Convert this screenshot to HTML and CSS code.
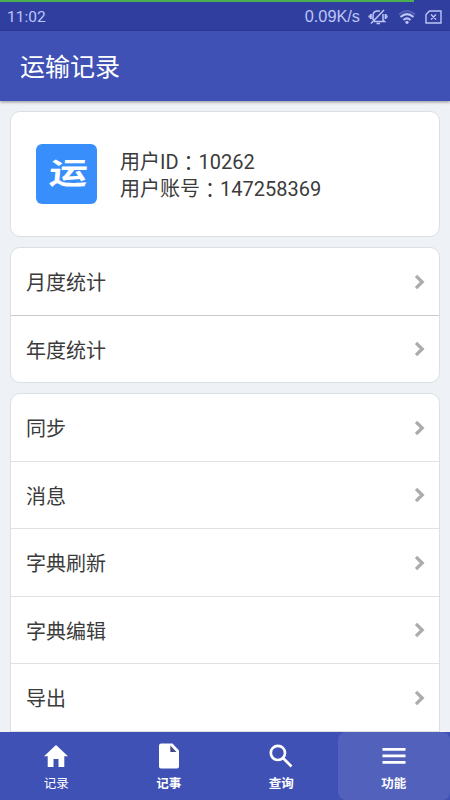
FILE: index.html
```html
<!DOCTYPE html>
<html lang="zh-CN">
<head>
<meta charset="utf-8">
<title>运输记录</title>
<link rel="stylesheet" href="styles.css">
</head>
<body>
<div class="app">
  <div class="status">
    <div class="progress"></div>
    <span class="time">11:02</span>
    <span class="speed">0.09K/s</span>
    <svg class="bell" width="20" height="18" viewBox="0 0 20 18" fill="none" stroke="currentColor" stroke-width="1.5"><path d="M5 12V7.500Q5 3.500 9 3H12M15 6V12L16.500 13.500H6M3 15.500L16 2M8.500 15.500H12"/><path stroke-width="2" d="M2.800 6V11M17.600 6V11"/><path d="M1.200 7.500V9.500M19 7.500V9.500"/></svg>
    <svg class="wifi" width="18" height="16" viewBox="0 0 18 16" fill="none" stroke="currentColor" stroke-width="2"><path opacity=".25" d="M1 5.500Q9-1.500 17 5.500"/><path d="M2.500 8Q9 2.300 15.500 8M5.500 11Q9 7.800 12.500 11"/><circle cx="9" cy="13.300" r="1.600" fill="currentColor" stroke="none"/></svg>
    <svg class="sim" width="17" height="14" viewBox="0 0 17 14" fill="none" stroke="currentColor" stroke-width="1.400"><path d="M4.500 1H16V13H1V4.500ZM6 4.500L11 9.500M11 4.500L6 9.500"/></svg>
  </div>
  <header class="header">运输记录</header>
  <main class="content">
    <section class="card user">
      <div class="logo"><span>运</span></div>
      <div class="info">
        <div>用户ID<span class="colon" lang="zh-TW">：</span>10262</div>
        <div>用户账号<span class="colon" lang="zh-TW">：</span>147258369</div>
      </div>
    </section>
    <section class="card stats">
      <div class="row">月度统计<svg class="arrow" viewBox="0 0 10 16"><path d="M1 2L7.200 8L1 14"/></svg></div>
      <div class="row">年度统计<svg class="arrow" viewBox="0 0 10 16"><path d="M1 2L7.200 8L1 14"/></svg></div>
    </section>
    <section class="card">
      <div class="row">同步<svg class="arrow" viewBox="0 0 10 16"><path d="M1 2L7.200 8L1 14"/></svg></div>
      <div class="row">消息<svg class="arrow" viewBox="0 0 10 16"><path d="M1 2L7.200 8L1 14"/></svg></div>
      <div class="row">字典刷新<svg class="arrow" viewBox="0 0 10 16"><path d="M1 2L7.200 8L1 14"/></svg></div>
      <div class="row">字典编辑<svg class="arrow" viewBox="0 0 10 16"><path d="M1 2L7.200 8L1 14"/></svg></div>
      <div class="row">导出<svg class="arrow" viewBox="0 0 10 16"><path d="M1 2L7.200 8L1 14"/></svg></div>
      <div class="row"></div>
    </section>
  </main>
  <nav class="tabs">
    <div class="tab"><svg viewBox="0 0 28 28"><path fill="#fff" d="M14 3L26 14.200H22.300V25H16.500V17H11.500V25H5.700V14.200H2Z"/></svg><span class="light">记录</span></div>
    <div class="tab"><svg viewBox="0 0 28 28"><path fill="#fff" d="M6.200 1.500H17.500L24 8.500V24.500Q24 26.500 22 26.500H6Q4 26.500 4 24.500V3.700Q4 1.500 6.200 1.500Z"/><path fill="#444b83" d="M15.300 3.500V10H21.500Z"/></svg><span>记事</span></div>
    <div class="tab"><svg viewBox="0 0 28 28" fill="none" stroke="#fff" stroke-width="2.700"><circle cx="10.900" cy="10.900" r="7.100"/><path d="M16 16L24.500 24.500"/></svg><span>查询</span></div>
    <div class="tab active"><svg viewBox="0 0 28 28"><path fill="#fff" d="M2.500 6H25.500V8.700H2.500ZM2.500 12.500H25.500V15.200H2.500ZM2.500 19H25.500V21.700H2.500Z"/></svg><span>功能</span></div>
  </nav>
</div>
</body>
</html>
```
FILE: styles.css
```css
* { box-sizing: border-box; }
body {
  margin: 0;
  background: #eef1f5;
  color: #3b3b3b;
  font-family: Roboto, "Noto Sans CJK SC", sans-serif;
}
.app { height: 800px; display: flex; flex-direction: column; overflow: hidden; }
.status {
  position: relative;
  height: 31px;
  flex: none;
  display: flex;
  align-items: center;
  padding: 2px 8px 0 7px;
  background: #303f9f;
  color: #bdc5f8;
  font-size: 16px;
}
.progress { position: absolute; top: 0; left: 0; width: 414px; height: 2px; background: #4caf50; }
.time { font-size: 15.500px; }
.speed { margin-left: auto; font-family: "Liberation Sans", sans-serif; font-size: 16.300px; }
.bell { margin-left: 8px; }
.wifi { margin-left: 10px; }
.sim { margin-left: 9px; }
.header {
  position: relative;
  z-index: 1;
  height: 70px;
  flex: none;
  padding: 2px 0 0 20px;
  background: #3f51b5;
  color: #fff;
  font-size: 25px;
  line-height: 70px;
  box-shadow: 0 1px 3px rgba(0, 0, 0, .4);
}
.content {
  flex: 1;
  min-height: 0;
  overflow: hidden;
  padding: 10px 10px 0;
  display: flex;
  flex-direction: column;
  gap: 10px;
}
.card {
  flex: none;
  border: 1px solid #dcdfe2;
  border-radius: 10px;
  background: #fff;
  overflow: hidden;
}
.user { height: 126.300px; display: flex; align-items: center; padding-left: 25px; }
.logo {
  width: 61px;
  height: 60px;
  border-radius: 6px;
  background: #388ffc;
  color: #fff;
  display: flex;
  align-items: center;
  justify-content: center;
  font-size: 35px;
  font-weight: 700;
  line-height: 1;
}
.logo span { transform: translateX(2px) scale(1.1, .86) skewX(-4deg); }
.info { margin-left: 23px; padding-top: 3px; font-size: 20px; line-height: 27px; }
.info div { height: 27px; }
.colon {
  display: inline-block;
  font-family: "Noto Sans CJK TC", sans-serif;
  line-height: 1;
  transform: translateY(2px);
}
.row {
  height: 67.500px;
  display: flex;
  align-items: center;
  justify-content: space-between;
  padding: 0 14px 0 15px;
  font-size: 20px;
  border-top: 1px solid #dfe1e3;
}
.row:first-child { height: 66.500px; border-top: 0; }
.stats .row { border-color: #c8c8ca; }
.arrow { width: 10px; height: 16px; fill: none; stroke: #acacac; stroke-width: 3.300; }
.tabs { height: 68px; flex: none; display: flex; background: #3f51b5; color: #fff; }
.tab {
  flex: 1;
  display: flex;
  flex-direction: column;
  align-items: center;
  padding-top: 10px;
  font-size: 12.500px;
  font-weight: 700;
  line-height: 18px;
}
.tab svg { width: 28px; height: 28px; margin-bottom: 5px; }
.tab .light { font-weight: 400; }
.active { background: #5262bc; border-radius: 8px; }
```
